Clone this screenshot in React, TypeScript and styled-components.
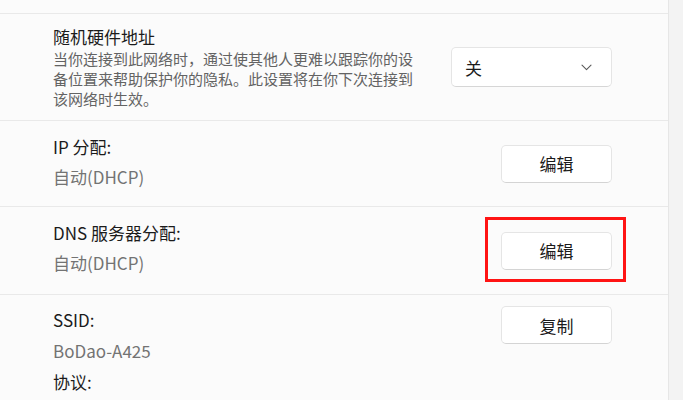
import React from 'react'
import styled, { createGlobalStyle } from 'styled-components'

const GlobalStyle = createGlobalStyle`
  html, body {
    margin: 0;
    padding: 0;
    height: 400px;
    overflow: hidden;
    background: #f3f3f3;
  }
  body {
    font-family: "Noto Sans CJK SC", "Noto Sans", sans-serif;
    color: #1b1b1b;
  }
`

const Page = styled.div`
  display: flex;
  width: 683px;
  height: 400px;
`

const Panel = styled.div`
  width: 668px;
  background: #fbfbfb;
  border-right: 1px solid #e6e6e6;
  display: flex;
  flex-direction: column;
  padding-top: 13px;
`

const Gutter = styled.div`
  flex: 1;
  background: #f3f3f3;
`

const Row = styled.div<{ $top?: boolean; $minHeight?: number }>`
  display: flex;
  justify-content: space-between;
  align-items: ${({ $top }) => ($top ? 'flex-start' : 'center')};
  min-height: ${({ $minHeight }) => $minHeight ?? 86}px;
  box-sizing: border-box;
  padding: ${({ $top }) => ($top ? '11px 56px 0 53px' : '0 56px 0 53px')};
  border-top: 1px solid #e9e9e9;
`

const TextBlock = styled.div<{ $gap?: number; $offset?: number }>`
  display: flex;
  flex-direction: column;
  gap: ${({ $gap }) => $gap ?? 8}px;
  margin-top: ${({ $offset }) => $offset ?? 0}px;
`

const Title = styled.div`
  font-size: 17px;
  line-height: 22px;
  color: #1b1b1b;
`

const Description = styled.div`
  width: 362px;
  font-size: 15px;
  line-height: 20px;
  color: #636363;
`

const Value = styled.div`
  font-size: 17px;
  line-height: 22px;
  color: #737373;
`

const Select = styled.div`
  width: 161px;
  height: 40px;
  box-sizing: border-box;
  display: flex;
  align-items: center;
  justify-content: space-between;
  padding: 0 19px 0 13px;
  background: #fff;
  border: 1px solid #e5e5e5;
  border-bottom-color: #d6d6d6;
  border-radius: 5px;
  font-size: 17px;
  color: #1b1b1b;
`

const Button = styled.div`
  width: 111px;
  height: 38px;
  box-sizing: border-box;
  display: flex;
  align-items: center;
  justify-content: center;
  background: #fff;
  border: 1px solid #e5e5e5;
  border-bottom-color: #d4d4d4;
  border-radius: 5px;
  font-size: 17px;
  color: #1b1b1b;
`

const Highlight = styled.div`
  position: relative;
  &::after {
    content: '';
    position: absolute;
    top: -15px;
    left: -16px;
    right: -14px;
    bottom: -12px;
    border: 3px solid #ff1414;
    pointer-events: none;
  }
`

function Chevron() {
  return (
    <svg width="11" height="7" viewBox="0 0 11 7" fill="none">
      <path d="M1 1.2 L5.5 5.6 L10 1.2" stroke="#5a5a5a" strokeWidth="1.1" strokeLinecap="round" strokeLinejoin="round" />
    </svg>
  )
}

export default function App() {
  return (
    <>
      <GlobalStyle />
      <Page>
        <Panel>
          <Row $minHeight={107}>
            <TextBlock $gap={1}>
              <Title>随机硬件地址</Title>
              <Description>
                当你连接到此网络时，通过使其他人更难以跟踪你的设备位置来帮助保护你的隐私。此设置将在你下次连接到该网络时生效。
              </Description>
            </TextBlock>
            <Select>
              <span>关</span>
              <Chevron />
            </Select>
          </Row>
          <Row>
            <TextBlock $offset={-4}>
              <Title>IP 分配:</Title>
              <Value>自动(DHCP)</Value>
            </TextBlock>
            <Button>编辑</Button>
          </Row>
          <Row $minHeight={88}>
            <TextBlock $offset={-6}>
              <Title>DNS 服务器分配:</Title>
              <Value>自动(DHCP)</Value>
            </TextBlock>
            <Highlight>
              <Button>编辑</Button>
            </Highlight>
          </Row>
          <Row $top>
            <TextBlock $gap={9} $offset={3}>
              <Title>SSID:</Title>
              <Value>BoDao-A425</Value>
              <Title>协议:</Title>
            </TextBlock>
            <Button>复制</Button>
          </Row>
        </Panel>
        <Gutter />
      </Page>
    </>
  )
}
